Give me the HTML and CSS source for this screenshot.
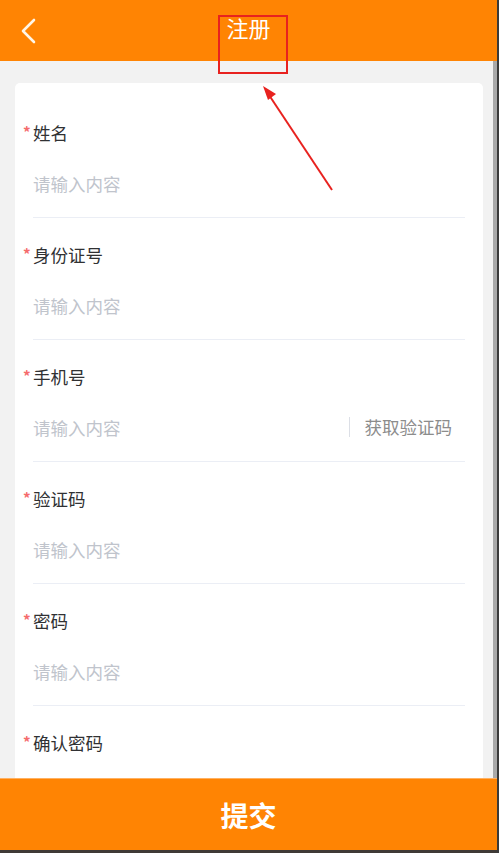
FILE: index.html
```html
<!DOCTYPE html>
<html lang="zh">

<head>
    <meta charset="UTF-8">
    <meta name="viewport" content="width=device-width, initial-scale=1.0">
    <title>注册</title>
    <link rel="stylesheet" href="styles.css">
</head>

<body>
    <div class="screen">
        <div class="app">
            <header class="topbar">
                <a class="back" href="#">
                    <svg width="18" height="26" viewBox="0 0 18 26">
                        <path d="M15 2 L4 13 L15 24" fill="none" stroke="#fff6e8" stroke-width="2.6" stroke-linecap="round" stroke-linejoin="round" />
                    </svg>
                </a>
                <h1 class="title">注册</h1>
            </header>

            <main class="content">
                <form class="card">
                    <div class="item">
                        <label class="label required">姓名</label>
                        <div class="field"><input type="text" placeholder="请输入内容"></div>
                    </div>
                    <div class="item">
                        <label class="label required">身份证号</label>
                        <div class="field"><input type="text" placeholder="请输入内容"></div>
                    </div>
                    <div class="item">
                        <label class="label required">手机号</label>
                        <div class="field">
                            <input type="text" placeholder="请输入内容">
                            <span class="code-btn">获取验证码</span>
                        </div>
                    </div>
                    <div class="item">
                        <label class="label required">验证码</label>
                        <div class="field"><input type="text" placeholder="请输入内容"></div>
                    </div>
                    <div class="item">
                        <label class="label required">密码</label>
                        <div class="field"><input type="password" placeholder="请输入内容"></div>
                    </div>
                    <div class="item">
                        <label class="label required">确认密码</label>
                        <div class="field"><input type="password" placeholder="请输入内容"></div>
                    </div>
                </form>
                <div class="scroll-track"></div>
            </main>

            <button class="submit" type="button">提交</button>
            <div class="bottom-edge"></div>

            <!-- annotation -->
            <div class="mark-box"></div>
            <svg class="mark-arrow" width="90" height="120" viewBox="0 0 90 120">
                <line x1="72" y1="106" x2="7" y2="8" stroke="#e8221f" stroke-width="2" />
                <path d="M3 2 L16 10 L8 16 Z" fill="#e8221f" />
            </svg>
        </div>
        <div class="edge"></div>
    </div>
</body>

</html>
```

FILE: styles.css
```css
* {
    box-sizing: border-box;
}

body {
    margin: 0;
    font-family: "Noto Sans CJK SC", "Noto Sans", sans-serif;
    background-color: #2e2e2e;
}

.screen {
    display: flex;
    height: 853px;
    overflow: hidden;
}

.app {
    position: relative;
    width: 497px;
    display: flex;
    flex-direction: column;
    background-color: #f2f2f2;
}

.edge {
    flex: 1;
    background-color: #3a3a3a;
}

.topbar {
    height: 61px;
    background-color: #ff8403;
    display: flex;
    align-items: center;
    justify-content: center;
    position: relative;
    flex-shrink: 0;
}

.back {
    position: absolute;
    left: 19px;
    top: 18px;
    display: block;
}

.title {
    margin: 0 0 4px 0;
    font-size: 22px;
    font-weight: normal;
    color: #ffffff;
    line-height: 1;
    transform: translateY(-2px);
}

.content {
    flex: 1;
    display: flex;
    overflow: hidden;
    padding: 22px 0 0 15px;
}

.card {
    flex: 1;
    margin-right: 10px;
    background-color: #ffffff;
    border-radius: 5px 5px 0 0;
    padding: 13px 18px 0 18px;
}

.scroll-track {
    width: 4px;
    margin-top: -22px;
    background-color: #a9a9a9;
}

.item {
    border-bottom: 1px solid #ebeef5;
}

.label {
    display: block;
    position: relative;
    padding-top: 25px;
    height: 49px;
    font-size: 17.5px;
    line-height: 24px;
    color: #303133;
}

.label.required::before {
    content: "*";
    position: absolute;
    left: -10px;
    top: 25px;
    color: #f56c6c;
    font-size: 15px;
    font-weight: bold;
    line-height: 22px;
}

.field {
    display: flex;
    align-items: center;
    height: 48px;
    margin-top: 14px;
    margin-bottom: 10px;
}

.field input {
    flex: 1;
    min-width: 0;
    border: none;
    outline: none;
    padding: 0;
    font-family: inherit;
    font-size: 17.5px;
    color: #303133;
    background: transparent;
}

.field input::placeholder {
    color: #c0c4cc;
}

.code-btn {
    border-left: 1px solid #dcdfe6;
    padding-left: 15px;
    font-size: 17.5px;
    line-height: 20px;
    color: #8c8c8c;
    margin-right: 13px;
}

.item:last-child .field {
    visibility: hidden;
}

.submit {
    height: 72px;
    flex-shrink: 0;
    border: none;
    background-color: #ff8403;
    color: #ffffff;
    font-family: inherit;
    font-size: 28px;
    font-weight: bold;
    padding: 0;
    border-top: 1px solid #ffb060;
}

.bottom-edge {
    height: 3px;
    flex-shrink: 0;
    background-color: #3f3a36;
}

.mark-box {
    position: absolute;
    left: 218px;
    top: 15px;
    width: 70px;
    height: 59px;
    border: 2px solid #e8221f;
}

.mark-arrow {
    position: absolute;
    left: 260px;
    top: 84px;
}
```
